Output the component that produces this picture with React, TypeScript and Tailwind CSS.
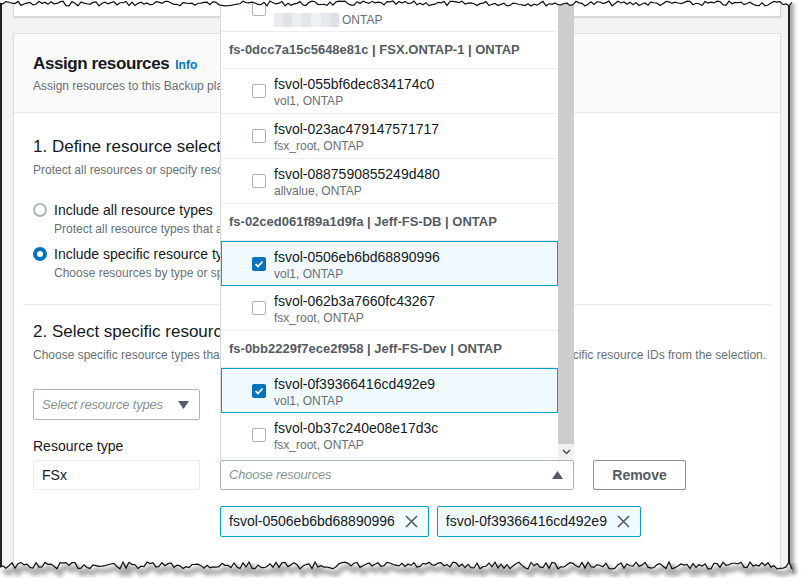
import React from "react";

type Item = { name: string; sub: string; checked?: boolean };
type Group = { header: string; items: Item[] };

const groups: Group[] = [
  {
    header: "fs-0dcc7a15c5648e81c | FSX.ONTAP-1 | ONTAP",
    items: [
      { name: "fsvol-055bf6dec834174c0", sub: "vol1, ONTAP" },
      { name: "fsvol-023ac479147571717", sub: "fsx_root, ONTAP" },
      { name: "fsvol-0887590855249d480", sub: "allvalue, ONTAP" },
    ],
  },
  {
    header: "fs-02ced061f89a1d9fa | Jeff-FS-DB | ONTAP",
    items: [
      { name: "fsvol-0506eb6bd68890996", sub: "vol1, ONTAP", checked: true },
      { name: "fsvol-062b3a7660fc43267", sub: "fsx_root, ONTAP" },
    ],
  },
  {
    header: "fs-0bb2229f7ece2f958 | Jeff-FS-Dev | ONTAP",
    items: [
      { name: "fsvol-0f39366416cd492e9", sub: "vol1, ONTAP", checked: true },
      { name: "fsvol-0b37c240e08e17d3c", sub: "fsx_root, ONTAP" },
    ],
  },
];

// torn paper edge, deterministic noise
function edge(seed: number, base: number, amp: number, x0: number, x1: number) {
  let s = seed;
  const pts: [number, number][] = [];
  for (let x = x0; x <= x1; x += 3) {
    s = (s * 9301 + 49297) % 233280;
    const r = s / 233280;
    pts.push([x, base + r * amp]);
  }
  return pts;
}

function Checkbox({ checked }: { checked?: boolean }) {
  if (checked) {
    return (
      <span className="flex h-[14px] w-[14px] shrink-0 items-center justify-center rounded-[2px] bg-[#0073bb]">
        <svg width="10" height="10" viewBox="0 0 10 10">
          <path d="M1.5 5.2 L4 7.5 L8.5 2.5" fill="none" stroke="white" strokeWidth="1.8" />
        </svg>
      </span>
    );
  }
  return <span className="h-[14px] w-[14px] shrink-0 rounded-[2px] border border-[#aab7b8] bg-white" />;
}

function Radio({ on }: { on?: boolean }) {
  return on ? (
    <span className="h-[14px] w-[14px] shrink-0 rounded-full border-[4px] border-[#0073bb] bg-white" />
  ) : (
    <span className="h-[14px] w-[14px] shrink-0 rounded-full border-2 border-[#aab7b8] bg-white" />
  );
}

function Row({ item }: { item: Item }) {
  return (
    <div
      className={
        item.checked
          ? "flex h-[45px] gap-[8px] border border-[#00a1c9] bg-[#f1faff] pl-[30px]"
          : "flex h-[45px] gap-[8px] border-b border-[#eaeded] pl-[31px]"
      }
    >
      <div className="flex items-center">
        <Checkbox checked={item.checked} />
      </div>
      <div className="flex flex-col pt-[6px]">
        <span className="text-[14px] leading-[18px] text-[#16191f]">{item.name}</span>
        <span className="text-[12px] leading-[16px] text-[#687078]">{item.sub}</span>
      </div>
    </div>
  );
}

function Caret({ up }: { up?: boolean }) {
  return (
    <svg width="11" height="8" viewBox="0 0 11 8" className="shrink-0">
      <path d={up ? "M0 8 L5.5 0 L11 8 Z" : "M0 0 L11 0 L5.5 8 Z"} fill="#545b64" />
    </svg>
  );
}

function XIcon() {
  return (
    <svg width="13" height="13" viewBox="0 0 13 13">
      <path d="M1 1 L12 12 M12 1 L1 12" stroke="#545b64" strokeWidth="1.6" />
    </svg>
  );
}

export default function App() {
  const top = edge(7, 1, 5, 0, 792);
  const bottom = edge(13, 562, 7, 0, 792);
  const topLine = top.map((p) => p.join(",")).join(" ");
  const bottomLine = bottom.map((p) => p.join(",")).join(" ");
  const shadowLine = bottom.map((p) => `${p[0] + 3},${p[1] + 5}`).join(" ");

  return (
    <div className="relative h-[584px] w-[801px] overflow-hidden bg-white font-['Liberation_Sans',Arial,sans-serif]">
      <div className="h-[570px] w-[790px] overflow-hidden border-x-2 border-[#222] bg-[#f2f3f3] pl-[11px] pr-[7px] shadow-[4px_3px_4px_rgba(0,0,0,0.35)]">
        <div className="h-[17px] border-x border-b border-[#d5dbdb] bg-white shadow-[0_1px_1px_rgba(0,0,0,0.12)]" />

        <div className="mt-[16px] h-[560px] border border-[#dde1e1] bg-white shadow-[0_1px_1px_rgba(0,0,0,0.12)]">
          <div className="h-[79px] border-b border-[#eaeded] bg-[#fafafa] px-[19px] pt-[19px]">
            <div className="flex items-baseline gap-[6px]">
              <span className="text-[17px] font-bold leading-[22px] tracking-[-0.4px] text-[#16191f]">
                Assign resources
              </span>
              <span className="text-[12px] font-bold text-[#0073bb]">Info</span>
            </div>
            <p className="mt-[3px] text-[12px] leading-[16px] text-[#687078]">
              Assign resources to this Backup plan.
            </p>
          </div>

          <div className="px-[9px]">
            <div className="border-b border-[#eaeded] px-[10px] pb-[23px] pt-[22px]">
              <h2 className="text-[17px] leading-[24px] text-[#16191f]">1. Define resource selection</h2>
              <p className="mt-[3px] text-[12px] leading-[16px] text-[#687078]">
                Protect all resources or specify resources to include.
              </p>

              <div className="mt-[22px] flex items-center gap-[7px]">
                <Radio />
                <span className="text-[14px] leading-[20px] text-[#16191f]">Include all resource types</span>
              </div>
              <p className="ml-[21px] mt-[1px] text-[12px] leading-[16px] text-[#687078]">
                Protect all resource types that are supported.
              </p>

              <div className="mt-[7px] flex items-center gap-[7px]">
                <Radio on />
                <span className="text-[14px] leading-[20px] text-[#16191f]">Include specific resource types</span>
              </div>
              <p className="ml-[21px] mt-[1px] text-[12px] leading-[16px] text-[#687078]">
                Choose resources by type or specific resource IDs.
              </p>
            </div>

            <div className="px-[10px] pt-[15px]">
              <h2 className="text-[17px] leading-[24px] text-[#16191f]">2. Select specific resource types</h2>
              <p className="mt-[3px] whitespace-nowrap text-[12px] leading-[16px] text-[#687078]">
                Choose specific resource types that you want to assign to this Backup plan. You can also exclude specific resource IDs from the selection.
              </p>

              <div className="mt-[26px] flex h-[31px] w-[167px] items-center justify-between rounded-[2px] border border-[#aab7b8] pl-[8px] pr-[10px]">
                <span className="whitespace-nowrap text-[13px] italic tracking-[-0.2px] text-[#879596]">
                  Select resource types
                </span>
                <Caret />
              </div>

              <p className="mt-[16px] text-[14px] leading-[20px] text-[#16191f]">Resource type</p>

              <div className="mt-[4px] flex items-center">
                <div className="flex h-[30px] w-[167px] items-center rounded-[2px] border border-[#eaeded] pl-[8px] text-[14px] text-[#16191f]">
                  FSx
                </div>
                <div className="ml-[20px] flex h-[30px] w-[354px] items-center justify-between rounded-[2px] border border-[#aab7b8] pl-[8px] pr-[10px]">
                  <span className="text-[13px] italic tracking-[-0.2px] text-[#879596]">Choose resources</span>
                  <Caret up />
                </div>
                <button className="ml-[19px] h-[30px] w-[93px] rounded-[2px] border border-[#879596] text-[14px] font-bold text-[#545b64]">
                  Remove
                </button>
              </div>

              <div className="ml-[187px] mt-[16px] flex gap-[8px]">
                {["fsvol-0506eb6bd68890996", "fsvol-0f39366416cd492e9"].map((t) => (
                  <div
                    key={t}
                    className="flex h-[31px] items-center gap-[10px] rounded-[2px] border border-[#00a1c9] bg-[#f1faff] pl-[8px] pr-[10px] text-[14px] text-[#16191f]"
                  >
                    {t}
                    <XIcon />
                  </div>
                ))}
              </div>
            </div>
          </div>
        </div>
      </div>

      {/* open dropdown list */}
      <div className="absolute left-[220px] top-0 flex h-[460px] w-[354px] overflow-hidden border-l border-[#d5dbdb] bg-white">
        <div className="w-[338px]">
          <div className="-mt-[13px] flex h-[45px] gap-[8px] border-b border-[#eaeded] pl-[31px]">
            <div className="flex items-center">
              <Checkbox />
            </div>
            <div className="flex flex-col pt-[7px]">
              <span className="text-[14px] leading-[18px] text-[#16191f]">&nbsp;</span>
              <span className="flex items-center gap-[3px] text-[12px] leading-[16px] text-[#687078]">
                <span className="flex h-[14px]">
                  <span className="w-[9px] bg-[#e9ebef]" />
                  <span className="w-[9px] bg-[#dfe2e8]" />
                  <span className="w-[10px] bg-[#eceef1]" />
                  <span className="w-[9px] bg-[#e2e5ea]" />
                  <span className="w-[10px] bg-[#f0f1f3]" />
                  <span className="w-[9px] bg-[#e6e8ed]" />
                  <span className="w-[9px] bg-[#dde2ea]" />
                </span>
                ONTAP
              </span>
            </div>
          </div>
          {groups.map((g) => (
            <div key={g.header}>
              <div className="flex h-[37px] items-center border-b border-[#eaeded] pl-[8px] text-[13px] font-bold text-[#545b64]">
                {g.header}
              </div>
              {g.items.map((it) => (
                <Row key={it.name} item={it} />
              ))}
            </div>
          ))}
        </div>
        <div className="flex w-[16px] flex-col">
          <div className="flex-1 bg-[#cdcdcd]" />
          <div className="flex h-[16px] items-center justify-center bg-[#f1f1f1]">
            <svg width="9" height="6" viewBox="0 0 9 6">
              <path d="M1 1 L4.5 4.5 L8 1" fill="none" stroke="#505050" strokeWidth="1.5" />
            </svg>
          </div>
        </div>
      </div>

      {/* torn edges */}
      <svg className="absolute left-0 top-0" width="801" height="584" viewBox="0 0 801 584">
        <defs>
          <filter id="blur" x="-5%" y="-50%" width="110%" height="200%">
            <feGaussianBlur stdDeviation="2" />
          </filter>
        </defs>
        <polygon
          points={`0,0 801,0 801,${top[top.length - 1][1]} ${[...top].reverse().map((p) => p.join(",")).join(" ")}`}
          fill="white"
        />
        <polyline points={topLine} fill="none" stroke="#111" strokeWidth="1.2" />
        <polygon points={`${bottomLine} 792,584 0,584`} fill="white" />
        <polyline points={shadowLine} fill="none" stroke="rgba(0,0,0,0.35)" strokeWidth="5" filter="url(#blur)" />
        <polyline points={bottomLine} fill="none" stroke="#111" strokeWidth="1.2" />
      </svg>
    </div>
  );
}
